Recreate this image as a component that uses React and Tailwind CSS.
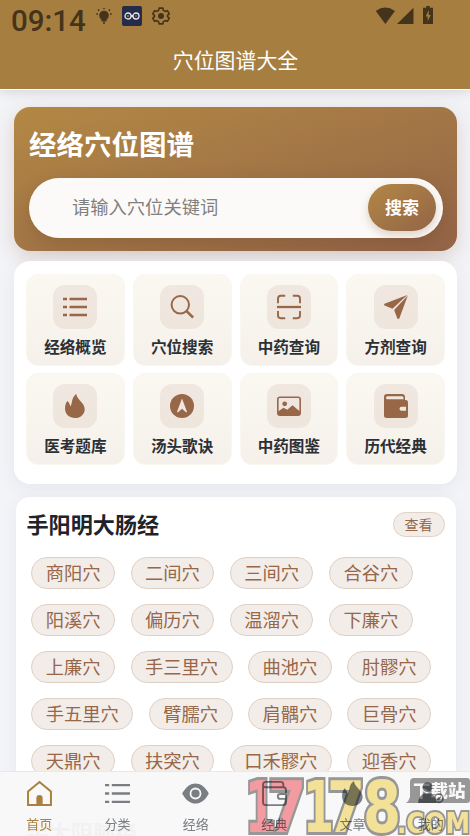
import clsx from 'clsx'

const entries = [
  { label: '经络概览', icon: ListIcon },
  { label: '穴位搜索', icon: SearchIcon },
  { label: '中药查询', icon: ScanIcon },
  { label: '方剂查询', icon: PlaneIcon },
  { label: '医考题库', icon: FlameIcon },
  { label: '汤头歌诀', icon: CompassIcon },
  { label: '中药图鉴', icon: PictureIcon },
  { label: '历代经典', icon: WalletFilledIcon },
]

const points = [
  '商阳穴', '二间穴', '三间穴', '合谷穴',
  '阳溪穴', '偏历穴', '温溜穴', '下廉穴',
  '上廉穴', '手三里穴', '曲池穴', '肘髎穴',
  '手五里穴', '臂臑穴', '肩髃穴', '巨骨穴',
  '天鼎穴', '扶突穴', '口禾髎穴', '迎香穴',
]

const tabs = [
  { label: '首页', icon: HomeIcon, active: true },
  { label: '分类', icon: ListIcon },
  { label: '经络', icon: EyeIcon },
  { label: '经典', icon: WalletIcon },
  { label: '文章', icon: FlameIcon },
  { label: '我的', icon: PersonIcon },
]

function Svg({ children, size = 24 }) {
  return (
    <svg width={size} height={size} viewBox="0 0 24 24" fill="none" className="shrink-0 overflow-visible">
      {children}
    </svg>
  )
}

function ListIcon({ size }) {
  return (
    <Svg size={size}>
      <path d="M0 4h4M6.5 4H24M0 12h4M6.5 12H24M0 20h4M6.5 20H24" stroke="currentColor" strokeWidth="2.3" />
    </Svg>
  )
}

function SearchIcon() {
  return (
    <Svg>
      <circle cx="10.3" cy="9.8" r="8.7" stroke="currentColor" strokeWidth="2" />
      <path d="M16.3 15.8l6.8 6.7" stroke="currentColor" strokeWidth="2.5" />
    </Svg>
  )
}

function ScanIcon() {
  return (
    <Svg>
      <path
        d="M1 8.2V3.7Q1 .8 3.8.8h4.4M15.8.8h4.4Q23 .8 23 3.7v4.5M1 16v4.3q0 2.9 2.8 2.9h4.4M15.8 23.2h4.4q2.8 0 2.8-2.9V16"
        stroke="currentColor"
        strokeWidth="1.9"
      />
      <path d="M0 12h24" stroke="currentColor" strokeWidth="2.3" />
    </Svg>
  )
}

function PlaneIcon() {
  return (
    <Svg>
      <path d="M23.3.1L.5 8.8Q-.5 9.8.6 10.6l7.9 3.1L23.3.1z" fill="currentColor" />
      <path d="M23.8.5L10.1 14.9l3.1 8.3q1.2 1.4 2.2 0L23.8.5z" fill="currentColor" />
    </Svg>
  )
}

function FlameIcon({ size }) {
  return (
    <Svg size={size}>
      <path
        d="M13.4 0c.2 5.5 8.3 8.6 8.3 15.2C21.7 20.4 17.5 24 12 24S2 20.4 2 14.6c0-3 .8-5.6 2.3-7.6C6.2 7.9 6.1 10 7.6 12.2 9.6 9 8.2 3.4 13.4 0z"
        fill="currentColor"
      />
    </Svg>
  )
}

function CompassIcon() {
  return (
    <Svg>
      <circle cx="12" cy="12" r="12" fill="currentColor" />
      <path d="M12 4.5l5 13.2q-.4 1-1.3.3L12 14.7 8.3 18q-.9.7-1.3-.3z" fill="#efe6df" />
    </Svg>
  )
}

function PictureIcon() {
  return (
    <Svg>
      <rect x=".8" y="3.3" width="22.4" height="17.8" rx="2.2" stroke="currentColor" strokeWidth="1.6" />
      <circle cx="7.7" cy="9.8" r="2.4" fill="currentColor" />
      <path d="M1 17.5l5.500-3.800 3.800 2 5.200-4.500L23 17.500v2.500q0 1-1.500 1h-19Q1 21 1 20z" fill="currentColor" />
    </Svg>
  )
}

function WalletFilledIcon() {
  return (
    <Svg>
      <path
        fillRule="evenodd"
        d="M3 0h15q3 0 3 3v3h.8Q24 6 24 8.2V21.5Q24 24 21.5 24h-19Q0 24 0 21.5V3Q0 0 3 0zM3.5 2.2Q2 2.2 2 3.7T3.5 5.2h16V3.7q0-1.5-1.5-1.5zM17.5 12.8a2 2 0 0 0 0 4H24v-4z"
        fill="currentColor"
      />
      <path d="M23 12v6" stroke="currentColor" strokeWidth="2" />
    </Svg>
  )
}

function WalletIcon({ size }) {
  return (
    <Svg size={size}>
      <path
        d="M1 3.5V20.5Q1 23.2 3.5 23.2h16.8q2.7 0 2.7-2.7V8.5Q23 6 20.5 6H3.5Q1 6 1 3.5T3.5.8h14.3q2.7 0 2.7 2.7V6M23 12.5h-5.500a2.300 2.300 0 0 0 0 4.600H23"
        stroke="currentColor"
        strokeWidth="1.8"
      />
    </Svg>
  )
}

function HomeIcon({ size }) {
  return (
    <Svg size={size}>
      <path d="M12 1L1 10v13h22V10z" stroke="currentColor" strokeWidth="1.9" />
      <path d="M9 23v-6.500a3 3 0 0 1 6 0V23z" fill="currentColor" />
    </Svg>
  )
}

function EyeIcon({ size }) {
  return (
    <Svg size={size}>
      <path d="M-.8 12C3 5 7.5 2.3 12 2.3s9 2.7 12.8 9.7C21 19 16.5 21.7 12 21.700S3 19-.8 12z" fill="currentColor" />
      <circle cx="12" cy="12" r="4.8" stroke="#f8f8f8" strokeWidth="1.7" />
    </Svg>
  )
}

function PersonIcon({ size }) {
  return (
    <Svg size={size}>
      <circle cx="9" cy="6" r="4.7" fill="currentColor" />
      <path d="M0 21q.5-6 5.500-9h7q5 3 5 9z" fill="currentColor" />
      <circle cx="20" cy="16.5" r="4" stroke="currentColor" strokeWidth="1.6" />
      <path d="M18 16.500l1.500 1.500 2.500-3" stroke="currentColor" strokeWidth="1.3" />
    </Svg>
  )
}

function StatusBar() {
  return (
    <div className="flex h-8 items-start justify-between pl-[11px] pr-[35px] text-[#44341b]">
      <div className="flex items-start">
        <span className="w-[76px] pt-[4px] font-['Roboto'] text-[29.5px] font-medium leading-[34px]">09:14</span>
        <svg width="16" height="16" viewBox="0 0 16 16" className="ml-[9px] mt-[8px]">
          <circle cx="8" cy="7.5" r="4.8" fill="currentColor" />
          <path d="M5.500 10h5v3.500h-5z" fill="currentColor" />
          <path d="M7 15h2M.3 6h1.700M14 6h1.700M2 1.500l1.200 1.200M14 1.500l-1.200 1.200M8 0v1.200" stroke="currentColor" strokeWidth="1.5" />
        </svg>
        <span className="ml-[10px] mt-[6px] flex h-5 w-5 items-center justify-center rounded-[2px] bg-[#252c49]">
          <svg width="16" height="10" viewBox="0 0 16 10" fill="none">
            <circle cx="4" cy="5" r="3" stroke="#e5e6ea" strokeWidth="1.3" />
            <circle cx="12" cy="5" r="3" stroke="#e5e6ea" strokeWidth="1.3" />
            <path d="M6.500 3.500l3 3M9.500 3.500l-3 3" stroke="#e5e6ea" />
            <path d="M3 5h2" stroke="#d7b34c" />
            <path d="M12 4v2" stroke="#da668b" />
          </svg>
        </span>
        <svg width="18" height="18" viewBox="0 0 24 24" fill="none" className="ml-[10px] mt-[7px]">
          <path
            d="M9.500 1.500h5l.7 3 2.300 1.300 3-.9 2.500 4.300-2.300 2.100v1.400l2.300 2.100-2.500 4.300-3-.9-2.300 1.300-.7 3h-5l-.7-3-2.300-1.300-3 .9L1 14.800l2.300-2.100v-1.400L1 9.200l2.500-4.300 3 .9 2.300-1.300z"
            stroke="currentColor"
            strokeWidth="2.2"
            strokeLinejoin="round"
          />
          <circle cx="12" cy="12" r="4" fill="currentColor" />
        </svg>
      </div>
      <svg width="60" height="20" viewBox="0 0 60 20" className="mt-[6px]" fill="currentColor">
        <path d="M.8 5Q10 -1.800 20 5l-9.700 13z" />
        <path d="M38.500 1.800V18H22z" />
        <path d="M49 1.800h2.200V0h3.600v1.800H58V18H48V1.800z" />
        <path d="M53.700 4l-3 6.500h2V15l3-6h-2z" fill="#a67e40" />
      </svg>
    </div>
  )
}

function Hero() {
  return (
    <section className="h-[144px] rounded-2xl bg-linear-to-br from-[#b38843] to-[#936447] px-[15px] pt-[15px] shadow-[0_6px_20px_rgba(147,100,71,0.25)]">
      <h1 className="text-[27.5px] font-bold leading-[42px] text-white">经络穴位图谱</h1>
      <div className="-mr-px mt-[14px] flex h-[60px] items-center justify-between rounded-full bg-[#fbfaf8] pl-[43px] pr-[7px] shadow-[0_6px_18px_rgba(80,50,30,0.2)]">
        <span className="-mt-[2px] text-[18.3px] text-[#808080]">请输入穴位关键词</span>
        <button className="mb-[1px] h-[47px] w-[68px] rounded-full bg-linear-to-br from-[#b38843] to-[#936447] pb-px text-[17px] font-bold text-white shadow-[0_4px_10px_rgba(147,100,71,0.28)]">
          搜索
        </button>
      </div>
    </section>
  )
}

function Entry({ label, icon: Icon }) {
  return (
    <div className="flex h-[92px] flex-col items-center rounded-xl border border-[#faf6f0] bg-linear-to-b from-[#fbf8f2] to-[#f5f0ea] pt-[10px]">
      <div className="flex h-11 w-11 items-center justify-center rounded-xl bg-linear-to-b from-[#f0e7e1] to-[#eee5dc] text-[#976748]">
        <Icon />
      </div>
      <span className="mt-[5px] text-[15.6px] font-bold leading-6 text-[#2b3036]">{label}</span>
    </div>
  )
}

function Meridian({ title, list = [] }) {
  return (
    <section className="mx-[1.5px] min-h-[295px] rounded-[14px] bg-white px-[11px] pt-[13px] shadow-[0_4px_18px_rgba(50,55,80,0.06)]">
      <div className="flex h-7 items-center justify-between">
        <h2 className="text-[22.1px] font-bold text-[#202329]">{title}</h2>
        <button className="h-[25px] w-[52px] rounded-full border border-[#e0d2c8] bg-[#f2ede9] text-[14px] leading-[22px] text-[#976748]">
          查看
        </button>
      </div>
      <div className="ml-[4.9px] mt-[19px] flex flex-wrap gap-x-[15.6px] gap-y-[15px]">
        {list.map((name) => (
          <span key={name} className="h-8 rounded-full border border-[#dfd0c6] bg-[#f2ede9] px-[13.4px] text-[18.3px] leading-[29px] text-[#976748]">
            {name}
          </span>
        ))}
      </div>
    </section>
  )
}

function TabBar() {
  return (
    <nav className="fixed inset-x-0 bottom-0 z-10 grid h-[65px] grid-cols-6 border-t border-[#e9e9ea] bg-[#f8f8f8]/97">
      {tabs.map(({ label, icon: Icon, active }) => (
        <div key={label} className={clsx('flex flex-col items-center pt-[9px]', active ? 'text-[#aa803f]' : 'text-[#7a7e83]')}>
          <Icon size={25} />
          <span className="mt-[8px] text-[13px] leading-5">{label}</span>
        </div>
      ))}
    </nav>
  )
}

function SiteStamp() {
  return (
    <svg
      width="224"
      height="64"
      viewBox="0 0 224 64"
      className="pointer-events-none fixed bottom-0 right-0 z-20 mix-blend-multiply [paint-order:stroke]"
      fontFamily="'DejaVu Sans'"
      fontWeight="bold"
      strokeLinejoin="miter"
    >
      <g fontSize="71" stroke="#9b9b9b" strokeWidth="6">
        <g fill="#faa0a5">
          <text x="-1" y="60" textLength="31" lengthAdjust="spacingAndGlyphs">1</text>
          <text x="22" y="60" textLength="38" lengthAdjust="spacingAndGlyphs">7</text>
        </g>
        <g fill="#fae89b">
          <text x="57" y="60" textLength="31" lengthAdjust="spacingAndGlyphs">1</text>
          <text x="81" y="60" textLength="38" lengthAdjust="spacingAndGlyphs">7</text>
          <text x="117" y="60" textLength="38" lengthAdjust="spacingAndGlyphs">8</text>
        </g>
      </g>
      <text x="151" y="61" fontSize="29" textLength="73" lengthAdjust="spacingAndGlyphs" fill="#fae89b" stroke="#9b9b9b" strokeWidth="4">
        .COM
      </text>
      <path d="M168 6h53q3 0 3 3v19q0 3-3 3h-61q3-2 4-6V10q0-4 4-4z" fill="#9b9b9b" />
      <text x="167" y="25" fontSize="17.5" fontFamily="'Noto Sans CJK SC', sans-serif" fontWeight="900" fill="#fff">
        下载站
      </text>
    </svg>
  )
}

export default function App() {
  return (
    <div className="h-[836px] overflow-hidden bg-[#f3f4f8] font-['Noto_Sans_CJK_SC',sans-serif]">
      <header className="relative h-[89px] bg-[#a67e40] shadow-[0_1px_0_#fff,0_2px_12px_rgba(0,0,0,0.15)]">
        <StatusBar />
        <div className="pl-[1px] pt-[11px] text-center text-[20.9px] leading-8 text-white">穴位图谱大全</div>
      </header>

      <main className="pl-[14px] pr-[13px] pt-[18px]">
        <Hero />
        <section className="relative mt-[10px] grid h-[223px] grid-cols-4 content-start gap-x-[8px] gap-y-[7px] rounded-2xl bg-white px-3 pt-[13px] shadow-[0_4px_18px_rgba(50,55,80,0.07)]">
          {entries.map((item) => (
            <Entry key={item.label} {...item} />
          ))}
        </section>
        <div className="mt-[13px] flex flex-col gap-[13px]">
          <Meridian title="手阳明大肠经" list={points} />
          <Meridian title="手太阴肺经" />
        </div>
      </main>

      <TabBar />
      <SiteStamp />
    </div>
  )
}
